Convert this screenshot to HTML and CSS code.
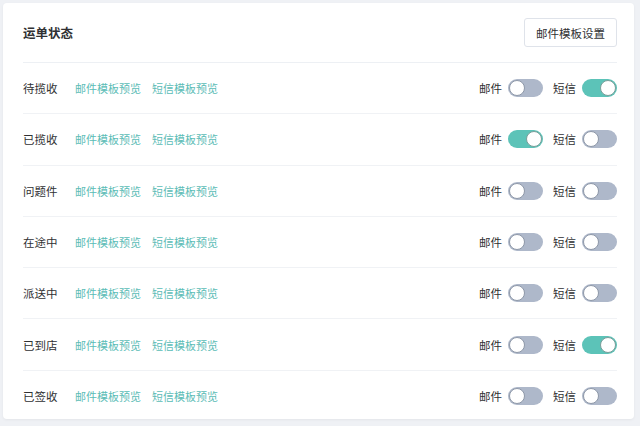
FILE: index.html
```html
<!DOCTYPE html>
<html lang="zh-CN">
<head>
  <meta charset="UTF-8" />
  <meta name="viewport" content="width=device-width, initial-scale=1.0"/>
  <title>运单状态</title>
  <link rel="stylesheet" href="styles.css">
</head>
<body>
  <div class="karte">
    <div class="kopf">
      <h2 class="titel">运单状态</h2>
      <button class="knopf">邮件模板设置</button>
    </div>

    <div class="zeile">
      <span class="status">待揽收</span>
      <a class="link" href="#">邮件模板预览</a>
      <a class="link" href="#">短信模板预览</a>
      <div class="schalter">
        <span>邮件</span><i class="toggle"></i>
        <span>短信</span><i class="toggle an"></i>
      </div>
    </div>

    <div class="zeile">
      <span class="status">已揽收</span>
      <a class="link" href="#">邮件模板预览</a>
      <a class="link" href="#">短信模板预览</a>
      <div class="schalter">
        <span>邮件</span><i class="toggle an"></i>
        <span>短信</span><i class="toggle"></i>
      </div>
    </div>

    <div class="zeile">
      <span class="status">问题件</span>
      <a class="link" href="#">邮件模板预览</a>
      <a class="link" href="#">短信模板预览</a>
      <div class="schalter">
        <span>邮件</span><i class="toggle"></i>
        <span>短信</span><i class="toggle"></i>
      </div>
    </div>

    <div class="zeile">
      <span class="status">在途中</span>
      <a class="link" href="#">邮件模板预览</a>
      <a class="link" href="#">短信模板预览</a>
      <div class="schalter">
        <span>邮件</span><i class="toggle"></i>
        <span>短信</span><i class="toggle"></i>
      </div>
    </div>

    <div class="zeile">
      <span class="status">派送中</span>
      <a class="link" href="#">邮件模板预览</a>
      <a class="link" href="#">短信模板预览</a>
      <div class="schalter">
        <span>邮件</span><i class="toggle"></i>
        <span>短信</span><i class="toggle"></i>
      </div>
    </div>

    <div class="zeile">
      <span class="status">已到店</span>
      <a class="link" href="#">邮件模板预览</a>
      <a class="link" href="#">短信模板预览</a>
      <div class="schalter">
        <span>邮件</span><i class="toggle"></i>
        <span>短信</span><i class="toggle an"></i>
      </div>
    </div>

    <div class="zeile">
      <span class="status">已签收</span>
      <a class="link" href="#">邮件模板预览</a>
      <a class="link" href="#">短信模板预览</a>
      <div class="schalter">
        <span>邮件</span><i class="toggle"></i>
        <span>短信</span><i class="toggle"></i>
      </div>
    </div>
  </div>
</body>
</html>
```

FILE: styles.css
```css
body {
  margin: 0;
  padding: 3px 6px 7px 3px;
  background: #eff1f5;
  font-family: "Noto Sans CJK SC", "Noto Sans", sans-serif;
  color: #303133;
}

.karte {
  height: 416px;
  overflow: hidden;
  padding: 0 17px 0 20px;
  background: #fff;
  border-radius: 4px;
  box-shadow: 0 1px 3px rgba(0, 0, 0, 0.05);
}

.kopf {
  display: flex;
  align-items: center;
  justify-content: space-between;
  height: 59px;
  border-bottom: 1px solid #edf0f4;
}

.titel {
  margin: 0;
  font-size: 12.5px;
  font-weight: bold;
}

.knopf {
  height: 29px;
  padding: 0 11px;
  font-family: inherit;
  font-size: 11.5px;
  color: #303133;
  background: #fff;
  border: 1px solid #dfe3ea;
  border-radius: 3px;
}

.zeile {
  display: flex;
  align-items: center;
  height: 50.3px;
  border-bottom: 1px solid #f0f2f5;
  font-size: 11.5px;
}

.status {
  width: 52px;
}

.link {
  margin-right: 11px;
  font-size: 11px;
  color: #5bbcb6;
  text-decoration: none;
}

.schalter {
  display: flex;
  align-items: center;
  margin-left: auto;
}

.schalter span {
  margin-right: 6px;
}

.toggle {
  position: relative;
  width: 35px;
  height: 18px;
  margin-right: 10px;
  border-radius: 9px;
  background: #aeb8ca;
}

.toggle:last-child {
  margin-right: 0;
}

/* Knopf im Schalter */
.toggle::after {
  content: "";
  position: absolute;
  top: 1px;
  left: 1px;
  width: 14px;
  height: 14px;
  border: 1px solid #8e98a8;
  border-radius: 50%;
  background: #fff;
}

.toggle.an {
  background: #5cc3b8;
}

.toggle.an::after {
  left: auto;
  right: 1px;
  border-color: #7a9e9a;
}
```
